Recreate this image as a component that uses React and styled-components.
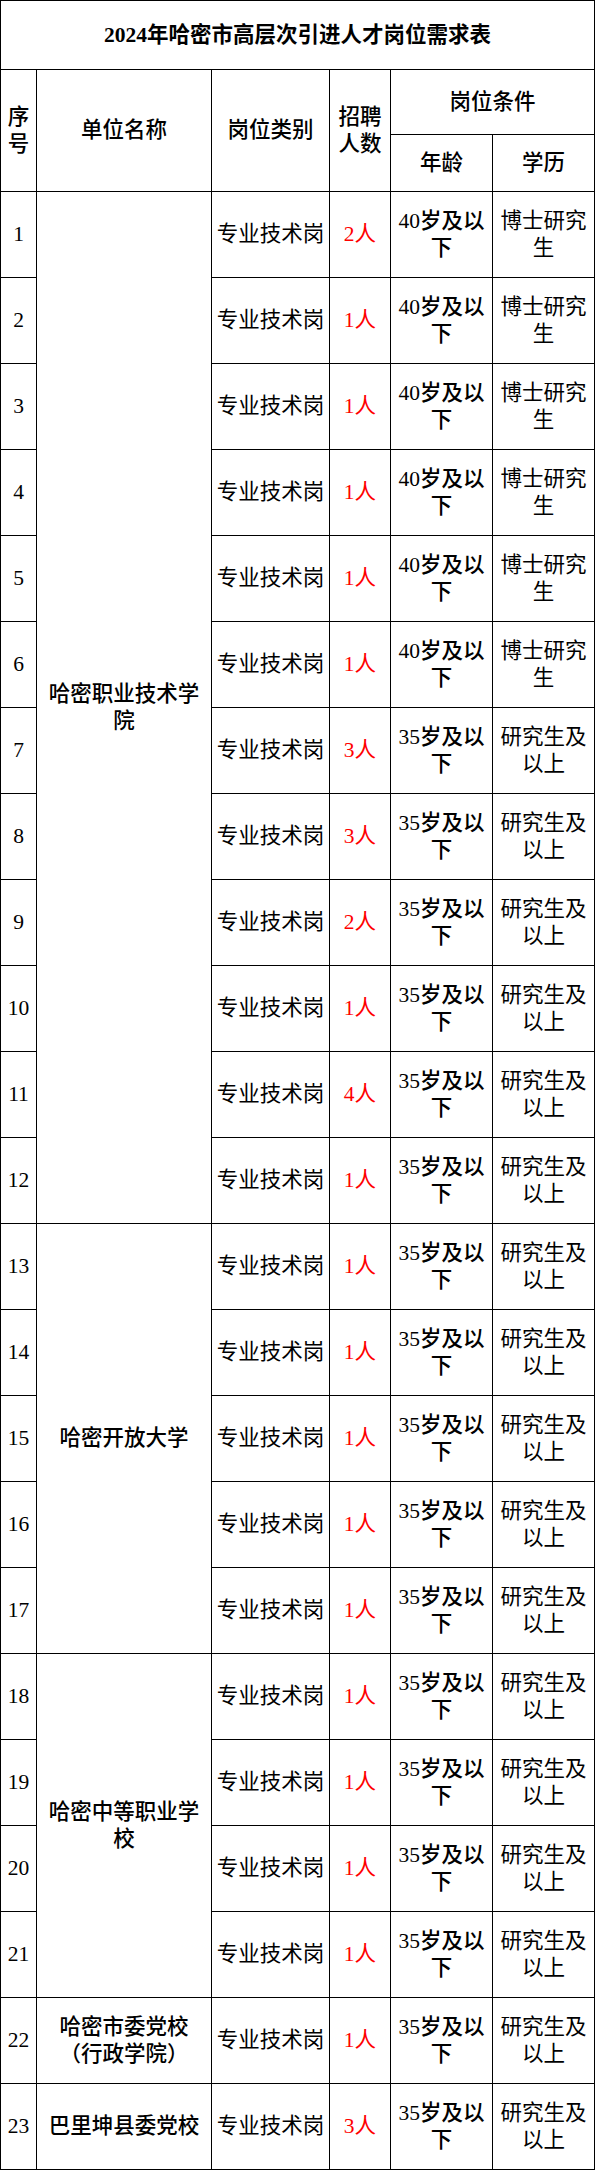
import React from "react";
import styled, { createGlobalStyle } from "styled-components";

const Global = createGlobalStyle`
  html, body { margin: 0; padding: 0; background: #fff; }
  body { font-family: "Liberation Serif", "Noto Sans CJK SC", serif; color: #000; }
`;

const Table = styled.table`
  width: 595px;
  table-layout: fixed;
  border-collapse: collapse;
  font-family: "Liberation Serif", "Noto Sans CJK SC", serif;
  font-size: 21.5px;
  line-height: 27px;
  color: #000;
`;

const Row = styled.tr`
  height: ${(p) => p.$h}px;
`;

const Cell = styled.td`
  border: 1px solid #000;
  padding: 0 4px;
  text-align: center;
  vertical-align: middle;
  font-weight: ${(p) => (p.$bold ? 500 : 400)};
  color: ${(p) => (p.$red ? "#ff0000" : "#000")};
  word-break: break-all;
`;

const TitleCell = styled.th`
  border: 1px solid #000;
  padding: 0;
  text-align: center;
  vertical-align: middle;
  font-size: 21.5px;
  font-weight: 700;
`;

const HeadCell = styled.th`
  border: 1px solid #000;
  padding: 0 4px;
  text-align: center;
  vertical-align: middle;
  font-weight: 500;
  word-break: break-all;
`;

const widths = [36, 175, 118, 61, 102, 102];

const counts = [2, 1, 1, 1, 1, 1, 3, 3, 2, 1, 4, 1, 1, 1, 1, 1, 1, 1, 1, 1, 1, 1, 3];

const units = {
  1: { span: 12, name: "哈密职业技术学院" },
  13: { span: 5, name: "哈密开放大学" },
  18: { span: 4, name: "哈密中等职业学校" },
  22: { span: 1, name: <>哈密市委党校<br />（行政学院）</> },
  23: { span: 1, name: "巴里坤县委党校" },
};

export default function App() {
  return (
    <>
      <Global />
      <Table>
        <colgroup>
          {widths.map((w, i) => (
            <col key={i} style={{ width: w }} />
          ))}
        </colgroup>
        <thead>
          <Row $h={69}>
            <TitleCell colSpan={6}>2024年哈密市高层次引进人才岗位需求表</TitleCell>
          </Row>
          <Row $h={65}>
            <HeadCell rowSpan={2}>序号</HeadCell>
            <HeadCell rowSpan={2}>单位名称</HeadCell>
            <HeadCell rowSpan={2}>岗位类别</HeadCell>
            <HeadCell rowSpan={2}>招聘人数</HeadCell>
            <HeadCell colSpan={2}>岗位条件</HeadCell>
          </Row>
          <Row $h={57}>
            <HeadCell>年龄</HeadCell>
            <HeadCell>学历</HeadCell>
          </Row>
        </thead>
        <tbody>
          {counts.map((c, i) => {
            const n = i + 1;
            const doc = n <= 6;
            const unit = units[n];
            return (
              <Row $h={86} key={n}>
                <Cell>{n}</Cell>
                {unit && (
                  <Cell rowSpan={unit.span} $bold>
                    {unit.name}
                  </Cell>
                )}
                <Cell>专业技术岗</Cell>
                <Cell $red>{c}人</Cell>
                <Cell $bold>{doc ? "40岁及以下" : "35岁及以下"}</Cell>
                <Cell>{doc ? "博士研究生" : "研究生及以上"}</Cell>
              </Row>
            );
          })}
        </tbody>
      </Table>
    </>
  );
}
